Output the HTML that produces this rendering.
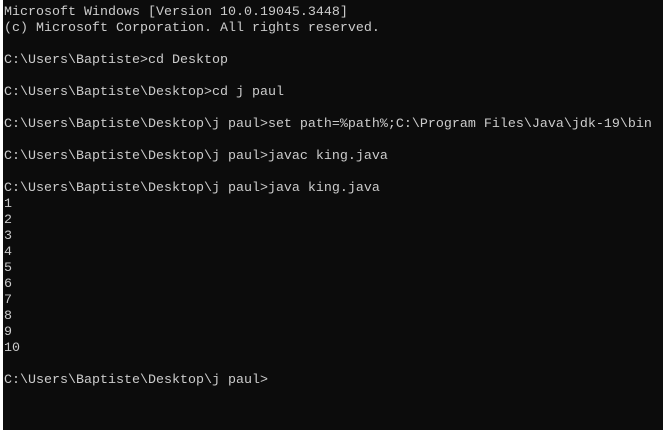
<!DOCTYPE html>
<html><head><meta charset="utf-8"><style>
html,body{margin:0;padding:0;width:663px;height:430px;overflow:hidden;background:#0c0c0c;}
.l{position:absolute;left:0;top:0;width:3px;height:430px;background:#fff;}
pre{position:absolute;left:4px;top:5px;margin:0;font-family:"Liberation Mono",monospace;font-size:13.33px;line-height:16px;color:#cccccc;white-space:pre;}
</style></head><body><div class="l"></div><pre>Microsoft Windows [Version 10.0.19045.3448]
(c) Microsoft Corporation. All rights reserved.

C:\Users\Baptiste>cd Desktop

C:\Users\Baptiste\Desktop>cd j paul

C:\Users\Baptiste\Desktop\j paul>set path=%path%;C:\Program Files\Java\jdk-19\bin

C:\Users\Baptiste\Desktop\j paul>javac king.java

C:\Users\Baptiste\Desktop\j paul>java king.java
1
2
3
4
5
6
7
8
9
10

C:\Users\Baptiste\Desktop\j paul></pre></body></html>
